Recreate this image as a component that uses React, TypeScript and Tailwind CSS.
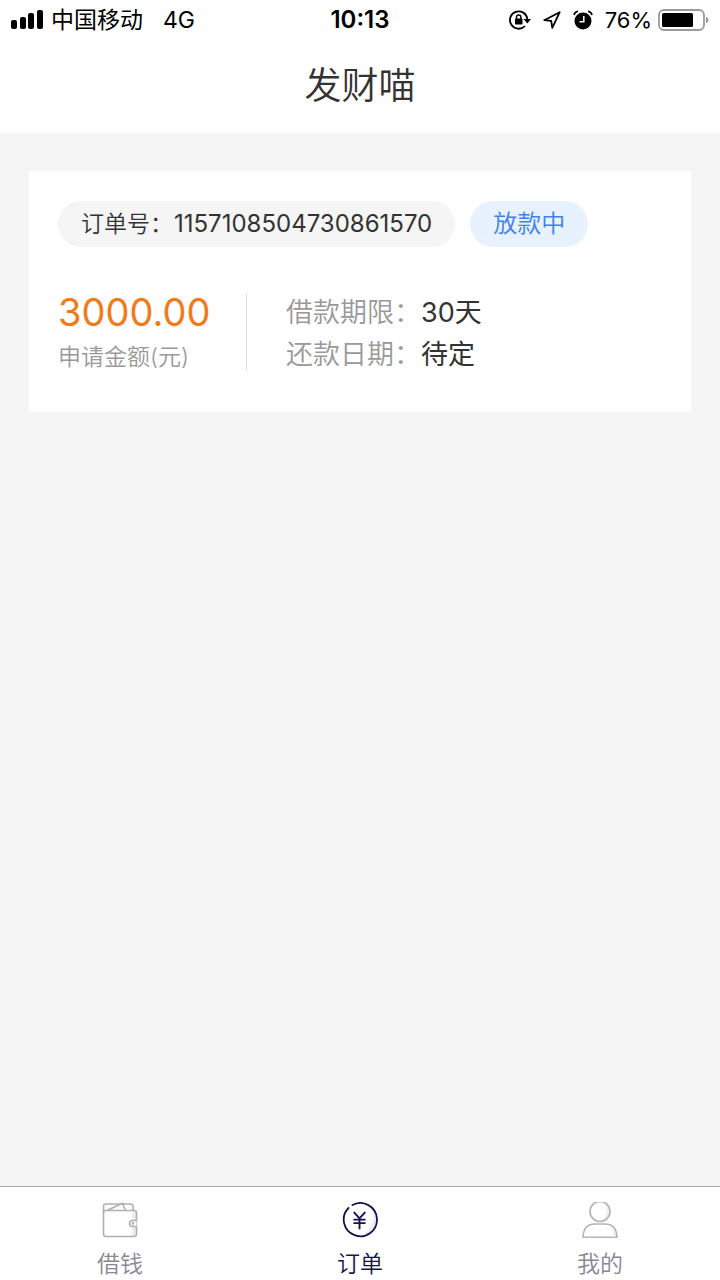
import { useState } from "react";
import type { ReactNode } from "react";
import { JapaneseYen } from "lucide-react";

// Status bar icons
const SignalIcon = () => (
  <svg width="32" height="20" viewBox="0 0 32 20" aria-hidden="true">
    <rect x="0" y="10" width="6" height="9" rx="2" />
    <rect x="9" y="7" width="6" height="12" rx="2" />
    <rect x="17" y="3" width="6" height="16" rx="2" />
    <rect x="26" y="0" width="6" height="19" rx="2" />
  </svg>
);

const RotationLockIcon = () => (
  <svg width="22" height="20" viewBox="0 0 22 20" fill="none" stroke="#000" aria-hidden="true">
    <path d="M18.3 9A8.7 8.7 0 1 0 16 16" strokeWidth="1.8" />
    <path d="M14.5 9H22L18.3 13.5Z" fill="#000" stroke="none" />
    <rect x="6" y="8.5" width="7.5" height="6" rx="0.8" fill="#000" stroke="none" />
    <path d="M7.5 9V7.2a2.2 2.2 0 0 1 4.4 0V9" strokeWidth="1.5" />
  </svg>
);

const LocationIcon = () => (
  <svg width="18" height="18" viewBox="0 0 18 18" fill="none" stroke="#000" strokeWidth="1.8" strokeLinejoin="round" aria-hidden="true">
    <path d="M16.7 1.2 1.2 9.2 8.2 9.8 9.3 16.8Z" />
  </svg>
);

const AlarmIcon = () => (
  <svg width="20" height="20" viewBox="0 0 20 20" aria-hidden="true">
    <circle cx="10" cy="11" r="8.5" />
    <path d="M1 5Q1.5 2 5 1.2M19 5Q18.5 2 15 1.2" fill="none" stroke="#000" strokeWidth="1.6" />
    <path d="M10.8 6v5.8H6.5" fill="none" stroke="#fff" strokeWidth="1.5" />
  </svg>
);

const BatteryIcon = () => (
  <svg width="51" height="22" viewBox="0 0 51 22" aria-hidden="true">
    <rect x="1" y="1" width="45" height="20" rx="5" fill="none" stroke="#9b9b9b" strokeWidth="1.8" />
    <rect x="4" y="4" width="31" height="14" rx="1.5" />
    <path d="M48 7.5Q50.5 8.5 50.5 11T48 14.5Z" fill="#9b9b9b" />
  </svg>
);

// Tab icons
const WalletIcon = () => (
  <svg width="36" height="36" viewBox="0 0 36 36" fill="none" stroke="#b0b0b0" strokeWidth="1.6" strokeLinejoin="round" aria-hidden="true">
    <path d="M30 9.5h4v22q0 2-2 3h-6q4-1 4-6Z" fill="#eeeeee" stroke="none" />
    <path d="M1.5 11V4.5Q1.5 2 4 2H28.500Q31 2 31 4.500V8" />
    <path d="M5 8.5 20.5 1.2 23.5 8.5" />
    <path d="M1.5 8.5H32Q34.5 8.5 34.5 11V32Q34.5 34.5 32 34.5H4Q1.5 34.5 1.5 32Z" />
    <path d="M34.5 18.5h-4a3 3 0 0 0 0 6h4" fill="#fff" />
    <circle cx="31" cy="21.5" r="0.6" />
  </svg>
);

const OrderIcon = () => (
  <svg width="36" height="36" viewBox="0 0 36 36" fill="none" stroke="#17134f" strokeWidth="1.8" strokeLinecap="round" aria-hidden="true">
    <path d="M31 9Q34 25 20 33Q34 32 34 18Q34 13 31 9Z" fill="#e6ecf7" stroke="none" />
    <path d="M10.5 3A16.6 16.6 0 1 1 6.5 6" />
    <JapaneseYen x={7} y={8} width={21} height={21} strokeWidth={2.2} />
  </svg>
);

const UserIcon = () => (
  <svg width="36" height="36" viewBox="0 0 36 36" fill="none" stroke="#b4b4b4" strokeWidth="1.6" aria-hidden="true">
    <path d="M23 2Q28 10 20 18Q28 17 28 9Q27 4 23 2ZM28 24Q32 29 31 34h3.5Q34 27 28 24Z" fill="#eeeeee" stroke="none" />
    <circle cx="18" cy="9.5" r="10" />
    <path d="M1 35.2H35Q34.5 22 23 22H13Q1.5 22 1 35.2Z" strokeLinejoin="round" />
  </svg>
);

const tabs: { id: string; label: string; icon: ReactNode }[] = [
  { id: "loan", label: "借钱", icon: <WalletIcon /> },
  { id: "orders", label: "订单", icon: <OrderIcon /> },
  { id: "mine", label: "我的", icon: <UserIcon /> },
];

const order = {
  id: "1157108504730861570",
  status: "放款中",
  amount: "3000.00",
  term: "30天",
  repayDate: "待定",
};

export default function App() {
  // Active Tab
  const [activeTab, setActiveTab] = useState("orders");

  return (
    <div className="flex min-h-screen flex-col bg-[#f5f5f5] font-['Inter','Noto_Sans_CJK_SC',sans-serif] font-[350] text-[#333]">
      {/* Status Bar */}
      <div className="flex h-10 items-center bg-white px-[11px] text-[23px] leading-10 font-normal text-black">
        <div className="flex flex-1 items-center">
          <SignalIcon />
          <span className="ml-2">中国移动</span>
          <span className="ml-5">4G</span>
        </div>
        <div className="text-[24px] font-semibold">10:13</div>
        <div className="flex flex-1 items-center justify-end">
          <RotationLockIcon />
          <span className="ml-3"><LocationIcon /></span>
          <span className="ml-3"><AlarmIcon /></span>
          <span className="ml-3 text-[22px]">76%</span>
          <span className="ml-1.5"><BatteryIcon /></span>
        </div>
      </div>

      {/* Header */}
      <header className="bg-white">
        <h1 className="h-[93px] text-center text-[37px] leading-[92px]">发财喵</h1>
      </header>

      {/* Orders */}
      <main className="flex-1 px-[29px] pt-[38px]">
        <section className="bg-white px-[29px] pt-[30px] pb-8">
          <div className="flex items-center gap-[15px] leading-[46px]">
            <div className="flex gap-px rounded-full bg-[#f5f5f5] px-[23px]">
              <span className="text-[23px]">订单号：</span>
              <span className="text-[24px] font-normal">{order.id}</span>
            </div>
            <div className="rounded-full bg-[#e8f1fe] px-[23px] text-[24px] text-[#3d80f0]">{order.status}</div>
          </div>

          <div className="mt-[43px] flex items-start">
            <div className="w-[188px]">
              <div className="text-[38px] leading-[44px] font-normal text-[#f27a1a]">{order.amount}</div>
              <div className="text-[23px] leading-[46px] text-[#999]">申请金额(元)</div>
            </div>
            <div className="mt-[3px] h-[78px] w-px bg-[#ddd]" />
            <dl className="mt-[2px] ml-[39px] text-[27px] leading-[42px]">
              <div className="flex">
                <dt className="text-[#999]">借款期限：</dt>
                <dd className="font-normal">{order.term}</dd>
              </div>
              <div className="flex">
                <dt className="text-[#999]">还款日期：</dt>
                <dd className="font-normal">{order.repayDate}</dd>
              </div>
            </dl>
          </div>
        </section>
      </main>

      {/* Tab Bar */}
      <nav className="flex border-t border-[#aaa] bg-white">
        {tabs.map((tab) => (
          <button
            key={tab.id}
            type="button"
            onClick={() => setActiveTab(tab.id)}
            className={`flex flex-1 cursor-pointer flex-col items-center gap-[10px] pt-[15px] text-[23px] leading-8 ${
              activeTab === tab.id ? "text-[#17134f]" : "text-[#888794]"
            }`}
          >
            {tab.icon}
            {tab.label}
          </button>
        ))}
      </nav>
    </div>
  );
}
